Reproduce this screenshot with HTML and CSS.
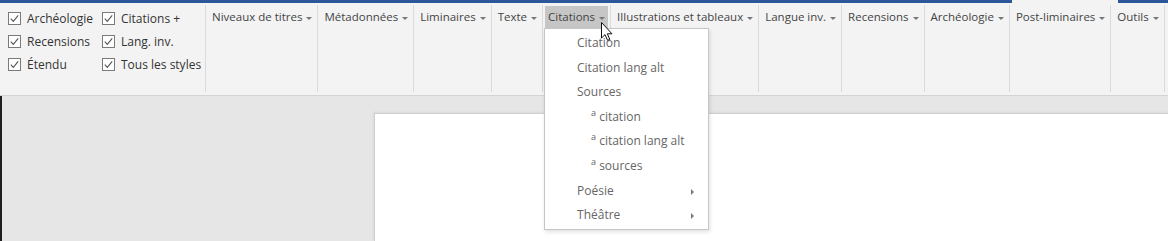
FILE: index.html
```html
<!DOCTYPE html>
<html lang="fr">

<head>
    <meta charset="UTF-8">
    <meta name="viewport" content="width=device-width, initial-scale=1.0">
    <title>Styles</title>
    <link rel="stylesheet" href="styles.css">
</head>

<body>
    <div class="topbar">
        <span class="topbar-blue first"></span>
        <span class="topbar-gap"></span>
        <span class="topbar-blue"></span>
    </div>

    <div class="ribbon">
        <div class="group checks">
            <label class="check"><svg viewBox="0 0 13 13"><rect x="0.5" y="0.5" width="12" height="12"/><path d="M2.8 6.6 L5.3 9.3 L10.2 3.4"/></svg>Archéologie</label>
            <label class="check"><svg viewBox="0 0 13 13"><rect x="0.5" y="0.5" width="12" height="12"/><path d="M2.8 6.6 L5.3 9.3 L10.2 3.4"/></svg>Citations +</label>
            <label class="check"><svg viewBox="0 0 13 13"><rect x="0.5" y="0.5" width="12" height="12"/><path d="M2.8 6.6 L5.3 9.3 L10.2 3.4"/></svg>Recensions</label>
            <label class="check"><svg viewBox="0 0 13 13"><rect x="0.5" y="0.5" width="12" height="12"/><path d="M2.8 6.6 L5.3 9.3 L10.2 3.4"/></svg>Lang. inv.</label>
            <label class="check"><svg viewBox="0 0 13 13"><rect x="0.5" y="0.5" width="12" height="12"/><path d="M2.8 6.6 L5.3 9.3 L10.2 3.4"/></svg>Étendu</label>
            <label class="check"><svg viewBox="0 0 13 13"><rect x="0.5" y="0.5" width="12" height="12"/><path d="M2.8 6.6 L5.3 9.3 L10.2 3.4"/></svg>Tous les styles</label>
        </div>
        <div class="group"><div class="drop">Niveaux de titres<i class="caret"></i></div></div>
        <div class="group"><div class="drop">Métadonnées<i class="caret"></i></div></div>
        <div class="group"><div class="drop">Liminaires<i class="caret"></i></div></div>
        <div class="group"><div class="drop">Texte<i class="caret"></i></div></div>
        <div class="group">
            <div class="drop open">Citations<i class="caret"></i>
                <svg class="cursor" viewBox="0 0 12 19"><path d="M0.5 0.5 L0.5 16 L4 12.6 L6.6 18.4 L8.8 17.4 L6.3 11.8 L11 11.8 Z"/></svg>
                <div class="menu">
                    <div class="menu-item">Citation</div>
                    <div class="menu-item">Citation lang alt</div>
                    <div class="menu-item">Sources</div>
                    <div class="menu-item sub"><sup>a</sup> citation</div>
                    <div class="menu-item sub"><sup>a</sup> citation lang alt</div>
                    <div class="menu-item sub"><sup>a</sup> sources</div>
                    <div class="menu-item more">Poésie<i class="arrow"></i></div>
                    <div class="menu-item more">Théâtre<i class="arrow"></i></div>
                </div>
            </div>
        </div>
        <div class="group"><div class="drop">Illustrations et tableaux<i class="caret"></i></div></div>
        <div class="group"><div class="drop">Langue inv.<i class="caret"></i></div></div>
        <div class="group"><div class="drop">Recensions<i class="caret"></i></div></div>
        <div class="group"><div class="drop">Archéologie<i class="caret"></i></div></div>
        <div class="group"><div class="drop">Post-liminaires<i class="caret"></i></div></div>
        <div class="group"><div class="drop">Outils<i class="caret"></i></div></div>
    </div>

    <div class="doc">
        <div class="page"></div>
    </div>
</body>

</html>
```

FILE: styles.css
```css
html,
body {
    margin: 0;
    height: 100%;
    overflow: hidden;
}

body {
    display: flex;
    flex-direction: column;
    font-family: "Segoe UI", "Open Sans", sans-serif;
    font-size: 11.5px;
    color: #444;
    background: #e6e6e6;
}

/* bandeau bleu du haut */
.topbar {
    display: flex;
    height: 3px;
    flex: none;
}

.topbar-blue {
    flex: 1;
    background: #2b579a;
}

.topbar-blue.first {
    flex: none;
    width: 1012px;
}

.topbar-gap {
    width: 106px;
    background: #f3f3f3;
}

.ribbon {
    display: flex;
    flex: none;
    height: 92px;
    background: #f3f3f3;
    border-bottom: 1px solid #d5d5d5;
}

.group {
    flex: none;
    margin: 2px 0 3px;
    padding: 0 2px;
    border-right: 1px solid #dadada;
}

.group.checks {
    width: 197px;
    padding: 2px 0 0 8px;
    display: grid;
    grid-template-columns: 94px auto;
    grid-auto-rows: 23px;
    align-content: start;
    color: #333;
}

.check {
    display: flex;
    align-items: center;
    gap: 6px;
    font-size: 12px;
}

.check svg {
    width: 13px;
    height: 13px;
}

.check rect {
    fill: #fff;
    stroke: #7a7a7a;
}

.check path {
    fill: none;
    stroke: #555;
    stroke-width: 1.1;
}

.drop {
    position: relative;
    margin-top: 1px;
    height: 22px;
    line-height: 22px;
    padding: 0 3px 0 4px;
    display: flex;
    align-items: center;
    white-space: nowrap;
}

.drop.open {
    background: #c6c6c6;
    padding-left: 3px;
}

.caret {
    width: 0;
    height: 0;
    margin: 2px 0 0 4px;
    border-left: 3px solid transparent;
    border-right: 3px solid transparent;
    border-top: 3px solid #777;
}

.cursor {
    position: absolute;
    left: 56px;
    top: 16px;
    width: 12px;
    height: 19px;
    z-index: 3;
}

.cursor path {
    fill: #fff;
    stroke: #111;
    stroke-width: 1;
    stroke-linejoin: round;
}

/* menu deroulant ouvert */
.menu {
    position: absolute;
    left: -1px;
    top: 22px;
    width: 163px;
    padding: 2px 0 1px;
    background: #fff;
    border: 1px solid #c6c6c6;
    box-shadow: 1px 2px 4px rgba(0, 0, 0, 0.12);
    z-index: 2;
    color: #666;
}

.menu-item {
    position: relative;
    height: 24.6px;
    line-height: 24.6px;
    padding-left: 32px;
    font-size: 12px;
}

.menu-item.sub {
    padding-left: 46px;
}

.menu-item sup {
    font-size: 9px;
    line-height: 0;
    vertical-align: 5px;
}

.arrow {
    position: absolute;
    right: 14px;
    top: 10px;
    width: 0;
    height: 0;
    border-top: 3px solid transparent;
    border-bottom: 3px solid transparent;
    border-left: 3px solid #777;
}

.doc {
    flex: 1;
    display: flex;
    border-left: 2px solid #1f1f1f;
    padding: 17px 0 0 372px;
}

.page {
    flex: 1;
    background: #fff;
    border-left: 1px solid #d0d0d0;
    border-top: 1px solid #d0d0d0;
    box-shadow: -1px -1px 2px rgba(0, 0, 0, 0.06);
}
```
